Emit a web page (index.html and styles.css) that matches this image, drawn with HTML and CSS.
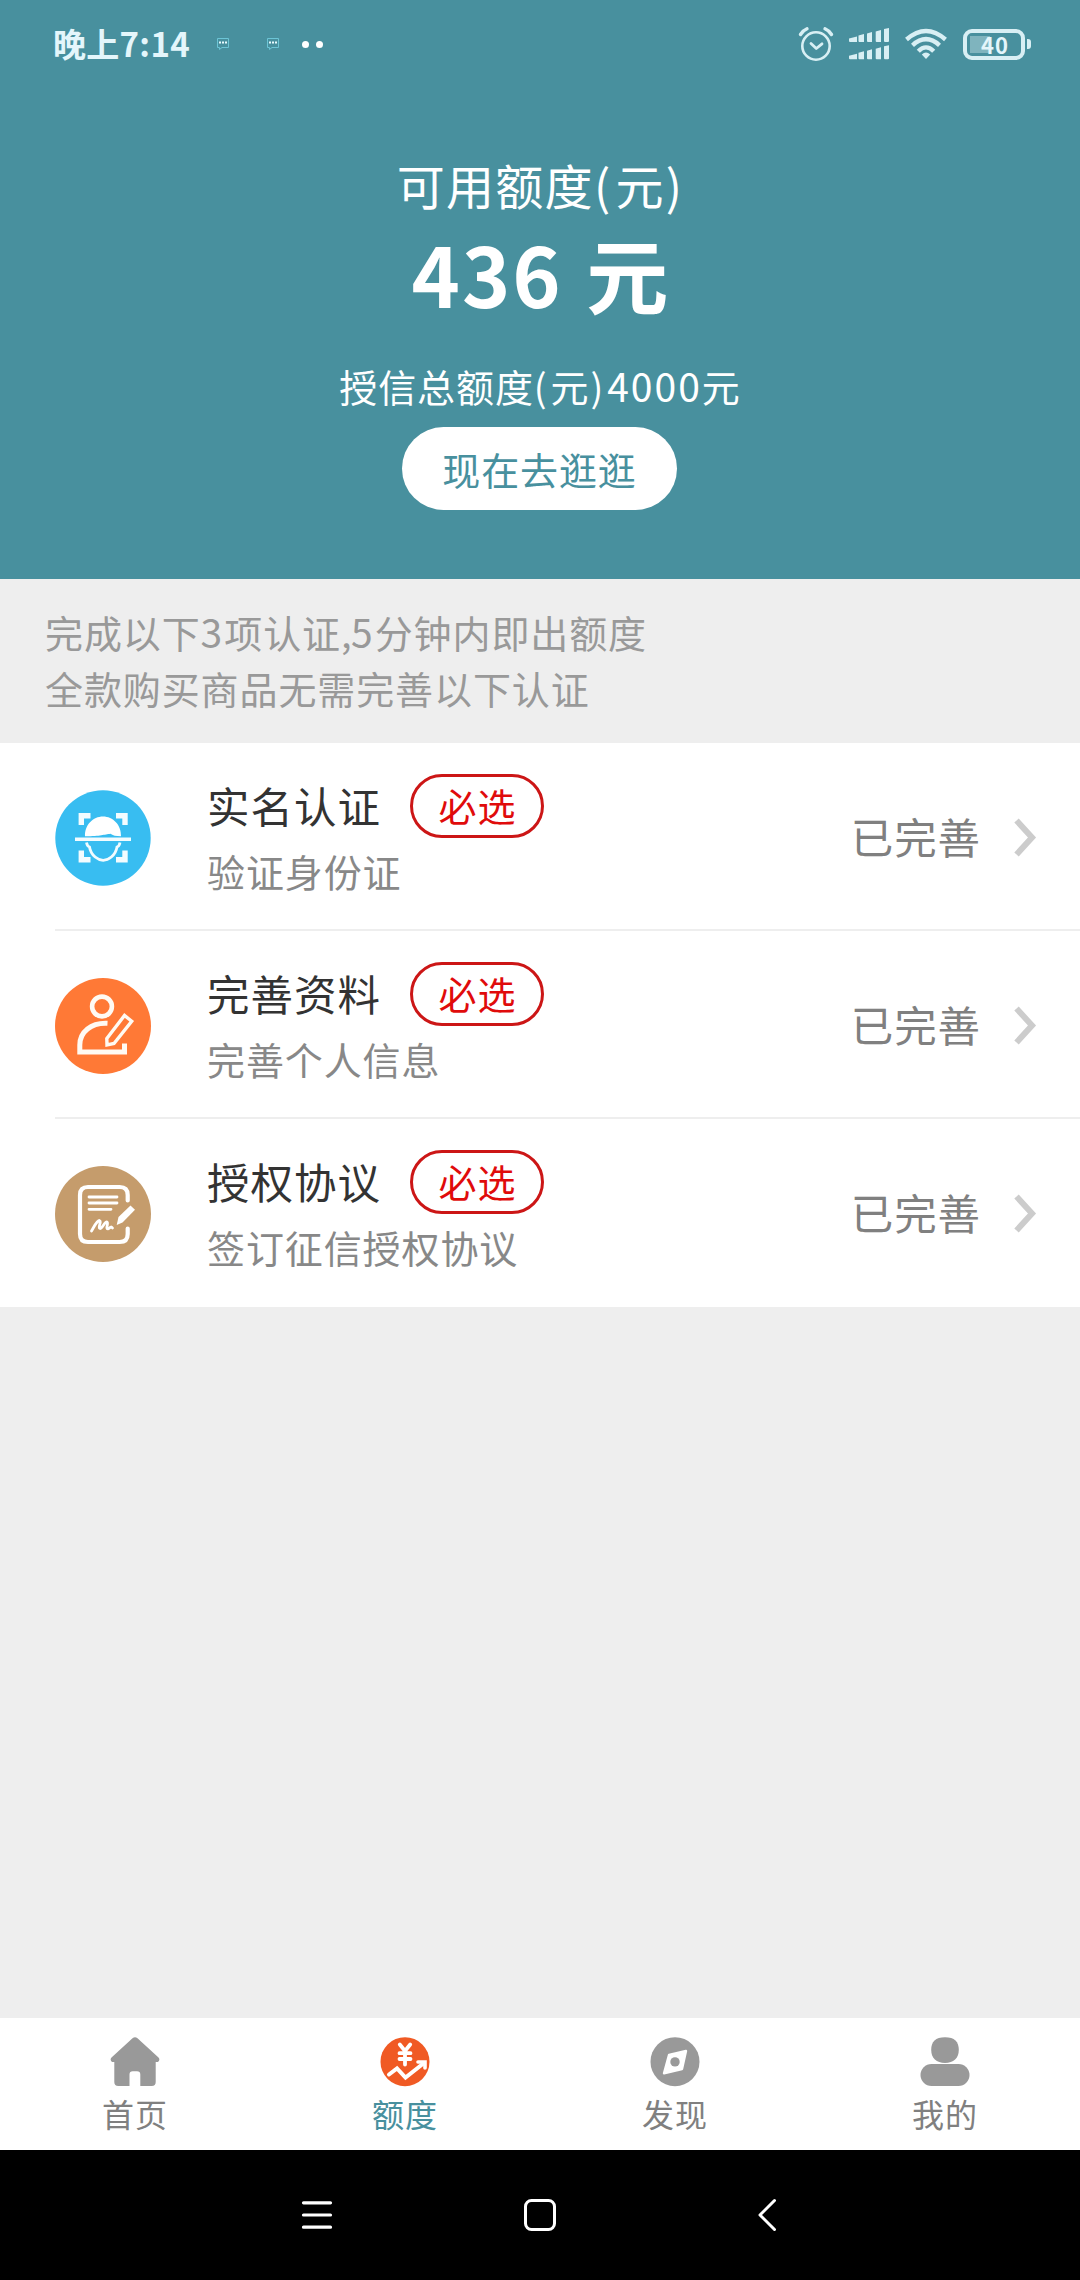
FILE: index.html
```html
<!DOCTYPE html>
<html lang="zh-CN">
<head>
<meta charset="utf-8">
<title>额度</title>
<link rel="stylesheet" href="styles.css">
</head>
<body>
<div class="screen">
  <header class="hero">
    <div class="status-bar">
      <span class="clock">晚上7:14</span>
      <svg class="chat" width="12" height="14" viewBox="0 0 12 14" fill="none" stroke="#6cc5d6"><path d="M.5 1.500H11.500V10.500H5L2.500 12.500V10.500H.5Z"/><path d="M2 5.500H10" stroke="#e8fbff" stroke-width="2" stroke-dasharray="2 1"/></svg>
      <svg class="chat" width="12" height="14" viewBox="0 0 12 14" fill="none" stroke="#6cc5d6"><path d="M.5 1.500H11.500V10.500H5L2.500 12.500V10.500H.5Z"/><path d="M2 5.500H10" stroke="#e8fbff" stroke-width="2" stroke-dasharray="2 1"/></svg>
      <span class="dots"><i></i><i></i></span>
      <svg class="alarm" width="36" height="36" viewBox="0 0 36 36" fill="none" stroke="#d8eff4" stroke-linecap="round"><circle cx="18" cy="20" r="13.700" stroke-width="2.600"/><path d="M2.500 8.500Q5 4.500 9 2.800M33.500 8.500Q31 4.500 27 2.800" stroke-width="3.400"/><path d="M13 17.500L18.300 22.500L24 17.800" stroke-width="2.800" stroke-linejoin="round"/></svg>
      <svg class="signal" width="41" height="32" viewBox="0 0 41 32" fill="#d8eff4"><path id="bars" d="M0 10.500L8 8.500V14H1Q0 14 0 13ZM9.500 7.500L15 6V14H10.500Q9.500 14 9.500 13ZM18 5.500L23 4V14H19Q18 14 18 13ZM26.700 3.500L32 2V14H27.700Q26.700 14 26.700 13ZM35 1L40 0V13Q40 14 39 14H36Q35 14 35 13Z"/><use href="#bars" y="17.300"/></svg>
      <svg class="wifi" width="42" height="32" viewBox="0 0 42 32" fill="none" stroke="#d8eff4" stroke-width="4.400"><path d="M1.500 11.500Q21 -5.500 40.500 11.500"/><path d="M7.500 17.300Q21 5 34.500 17.300"/><path d="M13.300 23.200Q21 15.500 28.700 23.200"/><path d="M16.800 26.500Q21 22.500 25.200 26.500L21 31Z" fill="#d8eff4" stroke="none"/></svg>
      <span class="battery"><b>40</b></span>
      <span class="battery-tip"></span>
    </div>
    <h1 class="hero-label">可用额度<span class="open">(</span>元<span class="close">)</span></h1>
    <p class="amount"><span class="amount-num">436</span> 元</p>
    <p class="total">授信总额度<span class="open">(</span>元<span class="close">)</span><span class="num">4000</span>元</p>
    <a class="shop-btn">现在去逛逛</a>
  </header>

  <section class="notice">
    <p>完成以下<span class="num">3</span>项认证<span class="comma">,</span><span class="num">5</span>分钟内即出额度</p>
    <p>全款购买商品无需完善以下认证</p>
  </section>

  <main class="list">
    <div class="row">
      <svg class="row-icon" width="96" height="96" viewBox="0 0 96 96"><circle cx="48" cy="48" r="47.700" fill="#38bdf1"/><g fill="none" stroke="#f3fcff"><path d="M26.300 35V25.700H35.500M61 25.700H70V35M26.300 60.500V69.700H35.500M61 69.700H70V60.500" stroke-width="5.400"/><path d="M20 49.300H76" stroke-width="3.600"/><path d="M31.500 52.500C32 55 33 56.500 34.500 57C36 66 43.500 70.300 48.200 70.300C53 70.300 60.500 66 62 57C63.500 56.500 64.500 55 65 52.500" stroke-width="2.800"/></g><path d="M30 46.300C29.500 35 38 26.500 48 26.500C58 26.500 66.500 35 66 46.300C61 46.300 57.500 45.500 55.500 43.800C49 44.500 46 46.300 30 46.300Z" fill="#fff"/></svg>
      <div class="row-text">
        <div class="row-head"><h2>实名认证</h2><span class="badge">必选</span></div>
        <p>验证身份证</p>
      </div>
      <span class="state">已完善</span>
      <svg class="chevron" width="24" height="40" viewBox="0 0 24 40" fill="none" stroke="#ccc" stroke-width="6"><path d="M2.500 3.500L18 20.500L2.500 37.500"/></svg>
    </div>
    <div class="row">
      <svg class="row-icon" width="96" height="96" viewBox="0 0 96 96"><circle cx="48" cy="48" r="48" fill="#ff7936"/><g fill="none" stroke="#fffaf3"><circle cx="47" cy="28.500" r="9.900" stroke-width="4.600"/><path d="M52.500 45.300C36 44.500 24.800 54 24.800 67V74H69.500V65.500" stroke-width="5"/><path d="M52 67L51.800 60.500L69.500 37.500L76.700 43.300L59 65.500Z" stroke-width="3.400"/></g></svg>
      <div class="row-text">
        <div class="row-head"><h2>完善资料</h2><span class="badge">必选</span></div>
        <p>完善个人信息</p>
      </div>
      <span class="state">已完善</span>
      <svg class="chevron" width="24" height="40" viewBox="0 0 24 40" fill="none" stroke="#ccc" stroke-width="6"><path d="M2.500 3.500L18 20.500L2.500 37.500"/></svg>
    </div>
    <div class="row">
      <svg class="row-icon" width="96" height="96" viewBox="0 0 96 96"><circle cx="48" cy="48" r="48" fill="#c59c6c"/><g fill="none" stroke="#fff" stroke-linecap="round"><path d="M72.700 34.500V29Q72.700 21 64.700 21H33Q25 21 25 29V68Q25 76 33 76H64.700Q72.700 76 72.700 68V62.500" stroke-width="4.200"/><path d="M34 31H62M34 37H62M34 43.300H56" stroke-width="2.800"/><path d="M36.500 65C40 59 42 54.500 44.500 54.500C47 55 42.500 62 45 62.500C47.500 62.500 49.500 55.500 52 56C54 57 50 63 53 62.800C55 62.500 55.500 59.500 57.500 62" stroke-width="2.800"/></g><path d="M61.700 59L63.500 51L75.500 39.500L80 43.800L67.500 56.500Z" fill="#fff"/></svg>
      <div class="row-text">
        <div class="row-head"><h2>授权协议</h2><span class="badge">必选</span></div>
        <p>签订征信授权协议</p>
      </div>
      <span class="state">已完善</span>
      <svg class="chevron" width="24" height="40" viewBox="0 0 24 40" fill="none" stroke="#ccc" stroke-width="6"><path d="M2.500 3.500L18 20.500L2.500 37.500"/></svg>
    </div>
  </main>

  <nav class="tabs">
    <a class="tab">
      <svg width="50" height="50" viewBox="0 0 50 50" fill="#999"><path d="M22.500 1.300Q25 -.8 27.500 1.300L48.500 20.500Q50.500 23 48 25H45.700V45Q45.700 49 41.700 49H30.300V37.500Q30.300 34.300 27 34.300H22.800Q19.500 34.300 19.500 37.500V49H8.300Q4.300 49 4.300 45V25H2Q-.5 23 1.500 20.500Z"/></svg>
      <span>首页</span>
    </a>
    <a class="tab tab-active">
      <svg width="50" height="50" viewBox="0 0 50 50"><circle cx="25" cy="24.700" r="24.500" fill="#f05a24"/><g fill="none" stroke="#fff" stroke-linecap="round"><path d="M19.800 7.500L25 14L30.200 7.500M25 14V27.500M19.500 16.200H30.500M19.500 22H30.500" stroke-width="3.800"/><path d="M9 37.500L17 31.500L25.500 40.500L44 26" stroke-width="4"/><path d="M38 25H45V31" stroke-width="3.600"/></g></svg>
      <span>额度</span>
    </a>
    <a class="tab">
      <svg width="50" height="50" viewBox="0 0 50 50"><circle cx="25" cy="24.700" r="24.500" fill="#999"/><path d="M19 18L36 14L32 32L14 36.300Z" fill="#fff" stroke="#fff" stroke-width="2.400" stroke-linejoin="round"/><circle cx="25" cy="24.900" r="4.700" fill="#999"/></svg>
      <span>发现</span>
    </a>
    <a class="tab">
      <svg width="50" height="50" viewBox="0 0 50 50" fill="#999"><path d="M25 .2C34.500 .2 38.800 4.500 38.800 13C38.800 21 33.500 26 25 26C16.500 26 11.200 21 11.200 13C11.200 4.500 15.500 .2 25 .2Z"/><rect x=".5" y="27" width="49" height="22" rx="11"/></svg>
      <span>我的</span>
    </a>
  </nav>

  <footer class="sys-nav">
    <svg width="32" height="34" viewBox="0 0 32 34" stroke="#fff" stroke-width="3.200" stroke-linecap="round"><path d="M2.500 4.800H29.500M2.500 17H29.500M2.500 29.200H29.500"/></svg>
    <svg width="34" height="34" viewBox="0 0 34 34" fill="none" stroke="#fff" stroke-width="3"><rect x="2.500" y="2.500" width="29" height="29" rx="6"/></svg>
    <svg class="back" width="20" height="34" viewBox="0 0 20 34" fill="none" stroke="#fff" stroke-width="3" stroke-linecap="round" stroke-linejoin="round"><path d="M17.500 2.500L3 17L17.500 31.500"/></svg>
  </footer>
</div>
</body>
</html>
```
FILE: styles.css
```css
* {
  box-sizing: border-box;
  margin: 0;
  padding: 0;
}

body {
  font-family: "Noto Sans CJK SC", sans-serif;
  font-size: 38px;
  letter-spacing: 0.9px;
  color: #888;
}

svg {
  display: block;
  flex: none;
}

.screen {
  display: flex;
  flex-direction: column;
  width: 1080px;
  height: 2280px;
  background: #eee;
}

/* Header */

.hero {
  display: flex;
  flex-direction: column;
  align-items: center;
  height: 579px;
  background: #48909e;
  color: #fff;
}

.status-bar {
  display: flex;
  align-items: center;
  width: 100%;
  height: 88px;
  padding: 0 49px 0 53px;
  margin-bottom: 67px;
  color: #e4f6fb;
}

.clock {
  width: 164px;
  font-size: 33px;
  font-weight: 700;
  line-height: 40px;
  letter-spacing: 0.3px;
  padding-bottom: 3px;
}

.chat {
  margin-right: 38px;
}

.dots {
  display: flex;
  gap: 7px;
  margin: 0 auto 0 -15px;
}

.dots i {
  width: 7px;
  height: 7px;
  border-radius: 50%;
  background: #fff;
}

.alarm {
  margin-right: 15px;
}

.signal {
  margin-right: 15px;
}

.wifi {
  margin-right: 16px;
}

.battery {
  display: flex;
  align-items: center;
  justify-content: center;
  width: 62px;
  height: 31px;
  border: 4px solid #d8eff4;
  border-radius: 9px;
  background: linear-gradient(#7fb4be, #7fb4be) 3px 3px / 20px 17px no-repeat;
}

.battery b {
  padding-left: 2px;
  font: 700 22px/22px "Noto Sans CJK SC", sans-serif;
  letter-spacing: 1px;
}

.battery-tip {
  width: 4px;
  height: 10px;
  margin-left: 2px;
  border-radius: 0 3px 3px 0;
  background: #d8eff4;
}

.hero-label {
  font-size: 48px;
  font-weight: 400;
  line-height: 58px;
  letter-spacing: 1.3px;
}

.open {
  padding-right: 4px;
}

.close {
  padding-left: 1px;
}

.amount {
  margin-top: 8px;
  font-size: 82px;
  font-weight: 700;
  line-height: 104px;
  letter-spacing: 0;
  word-spacing: 5px;
}

.amount-num {
  letter-spacing: 2px;
}

.total {
  margin-top: 36px;
  line-height: 50px;
}

.total .open {
  padding-right: 3px;
}

.total .close {
  padding: 0 3px 0 1px;
}

.num {
  font-size: 39px;
  line-height: 1;
  letter-spacing: 2px;
}

.shop-btn {
  width: 275px;
  height: 83px;
  margin: 16px 1px 0 0;
  border-radius: 42px;
  background: #fff;
  color: #48909e;
  line-height: 84px;
  text-align: center;
}

/* Notice */

.notice {
  height: 164px;
  padding: 25px 45px;
  line-height: 56px;
  color: #999;
}

.comma {
  letter-spacing: -0.5px;
}

/* Steps */

.list {
  background: #fff;
}

.row {
  display: flex;
  align-items: center;
  height: 188px;
  margin-left: 55px;
  padding-right: 42px;
  border-bottom: 2px solid #eee;
}

.row:last-child {
  border-bottom-color: transparent;
}

.row-icon {
  margin-top: 3px;
}

.row-text {
  flex: 1;
  margin-left: 56px;
}

.row-head {
  display: flex;
  align-items: center;
  gap: 29px;
}

.row-head h2 {
  font-size: 42.500px;
  font-weight: 400;
  line-height: 62px;
  letter-spacing: 1px;
  padding-bottom: 2px;
  color: #333;
}

.badge {
  width: 134px;
  height: 64px;
  padding-left: 1px;
  border: 3px solid #cc1616;
  border-radius: 32px;
  color: #e00b0b;
  line-height: 56px;
  text-align: center;
}

.row-text p {
  margin: 8px 0 2px;
  line-height: 50px;
}

.state {
  font-size: 42.500px;
  line-height: 60px;
  color: #808080;
}

.chevron {
  margin: 2px 0 0 33px;
}

/* Bottom tabs */

.tabs {
  display: grid;
  grid-template-columns: repeat(4, 1fr);
  height: 132px;
  margin-top: auto;
  background: #fff;
}

.tab {
  display: flex;
  flex-direction: column;
  align-items: center;
  padding: 19px 1px 0 0;
  font-size: 32px;
  line-height: 40px;
  color: #808080;
}

.tab span {
  margin: 6px 0 0 1px;
}

.tab-active {
  color: #48909e;
}

/* System navigation */

.sys-nav {
  display: flex;
  justify-content: center;
  align-items: center;
  gap: 190px;
  height: 130px;
  padding-right: 2px;
  background: #000;
}

.back {
  margin-left: 10px;
}
```
